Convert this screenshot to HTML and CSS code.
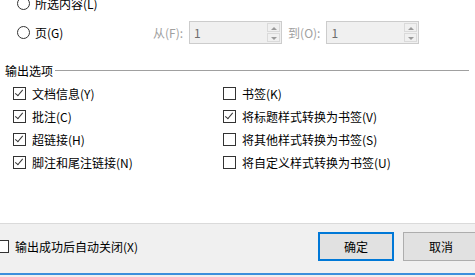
FILE: index.html
```html
<!DOCTYPE html>
<html lang="zh-CN">
<head>
  <meta charset="UTF-8" />
  <title>输出选项</title>
  <link rel="stylesheet" href="styles.css">
</head>
<body>
  <div class="range">
    <label class="radio-row first">
      <span class="radio"></span>
      <span>所选内容(L)</span>
    </label>
    <div class="radio-row">
      <span class="radio"></span>
      <span class="page-label">页(G)</span>
      <span class="dim from">从(F):</span>
      <div class="spin">
        <span class="spin-val">1</span>
        <span class="spin-btns"><i class="up"></i><i class="down"></i></span>
      </div>
      <span class="dim to">到(O):</span>
      <div class="spin">
        <span class="spin-val">1</span>
        <span class="spin-btns"><i class="up"></i><i class="down"></i></span>
      </div>
    </div>
  </div>

  <div class="group">
    <div class="group-title"><span>输出选项</span><span class="rule"></span></div>
    <div class="options">
      <div class="col left">
        <div class="opt"><span class="box checked"></span>文档信息(Y)</div>
        <div class="opt"><span class="box checked"></span>批注(C)</div>
        <div class="opt"><span class="box checked"></span>超链接(H)</div>
        <div class="opt"><span class="box checked"></span>脚注和尾注链接(N)</div>
      </div>
      <div class="col right">
        <div class="opt"><span class="box"></span>书签(K)</div>
        <div class="opt"><span class="box checked"></span>将标题样式转换为书签(V)</div>
        <div class="opt"><span class="box"></span>将其他样式转换为书签(S)</div>
        <div class="opt"><span class="box"></span>将自定义样式转换为书签(U)</div>
      </div>
    </div>
  </div>

  <div class="footer">
    <div class="auto-close"><span class="box"></span>输出成功后自动关闭(X)</div>
    <div class="buttons">
      <button class="btn primary">确定</button>
      <button class="btn">取消</button>
    </div>
  </div>
  <div class="edge"></div>
</body>
</html>
```

FILE: styles.css
```css
body {
  margin: 0;
  width: 475px;
  height: 277px;
  overflow: hidden;
  background: #f0f0f0;
  color: #000000;
  font-family: "Noto Sans CJK SC", "Noto Sans", sans-serif;
  font-size: 12px;
}

.range {
  padding-left: 17px;
  padding-top: 1px;
  margin-top: -10px;
  background: #ffffff;
}

.radio-row {
  display: flex;
  align-items: center;
  height: 24px;
}

.radio-row.first {
  margin-bottom: 5px;
}

.radio {
  width: 11px;
  height: 11px;
  border: 1px solid #333;
  border-radius: 50%;
  margin-right: 5px;
  flex: none;
}

.page-label {
  width: 118px;
}

.dim {
  color: #a0a0a0;
}

.from {
  margin-right: 6px;
}

.to {
  margin: 0 6px 0 6px;
}

.spin {
  display: flex;
  width: 91px;
  height: 21px;
  border: 1px solid #cccccc;
  background: #f0f0f0;
}

.spin-val {
  flex: 1;
  padding-left: 4px;
  line-height: 21px;
  color: #6d6d6d;
}

.spin-btns {
  display: flex;
  flex-direction: column;
  width: 13px;
  margin: 1px 1px 1px 0;
  gap: 1px;
}

.spin-btns i {
  flex: 1;
  border: 1px solid #dadada;
  background: #f0f0f0;
  position: relative;
}

.spin-btns i::after {
  content: "";
  position: absolute;
  left: 3px;
  top: 3px;
  border-left: 3px solid transparent;
  border-right: 3px solid transparent;
}

.spin-btns .up::after {
  border-bottom: 3px solid #9a9a9a;
}

.spin-btns .down::after {
  border-top: 3px solid #9a9a9a;
}

.group {
  padding-top: 18px;
  padding-bottom: 49px;
  background: #ffffff;
}

.group-title {
  display: flex;
  align-items: center;
  padding-left: 5px;
  height: 16px;
}

.rule {
  height: 1px;
  background: #a0a0a0;
  width: 414px;
  margin-left: 2px;
  margin-top: 1px;
}

.options {
  display: flex;
  margin-top: 4px;
}

.col {
  display: flex;
  flex-direction: column;
}

.col.left {
  padding-left: 13px;
  width: 210px;
}

.opt {
  display: flex;
  align-items: center;
  height: 23px;
}

.box {
  width: 11px;
  height: 11px;
  border: 1px solid #333333;
  margin-right: 6px;
  position: relative;
  flex: none;
  background: #fff;
}

.box.checked::after {
  content: "";
  position: absolute;
  left: 3px;
  top: 0px;
  width: 3px;
  height: 7px;
  border-right: 1px solid #333;
  border-bottom: 1px solid #333;
  transform: rotate(40deg);
}

.footer {
  height: 49px;
  border-top: 1px solid #dadada;
  background: #f0f0f0;
  display: flex;
  align-items: flex-start;
  justify-content: space-between;
}

.auto-close {
  display: flex;
  align-items: center;
  height: 13px;
  margin-left: -4px;
  margin-top: 16px;
}

.buttons {
  display: flex;
  gap: 9px;
  margin-right: -4px;
  margin-top: 8px;
}

.btn {
  width: 76px;
  height: 29px;
  font-family: inherit;
  font-size: 12px;
  background: #e1e1e1;
  border: 1px solid #adadad;
  color: #000;
  padding: 0;
}

.btn.primary {
  border: 2px solid #0078d7;
}

.edge {
  height: 2px;
  background: #3c8fdc;
}
```
